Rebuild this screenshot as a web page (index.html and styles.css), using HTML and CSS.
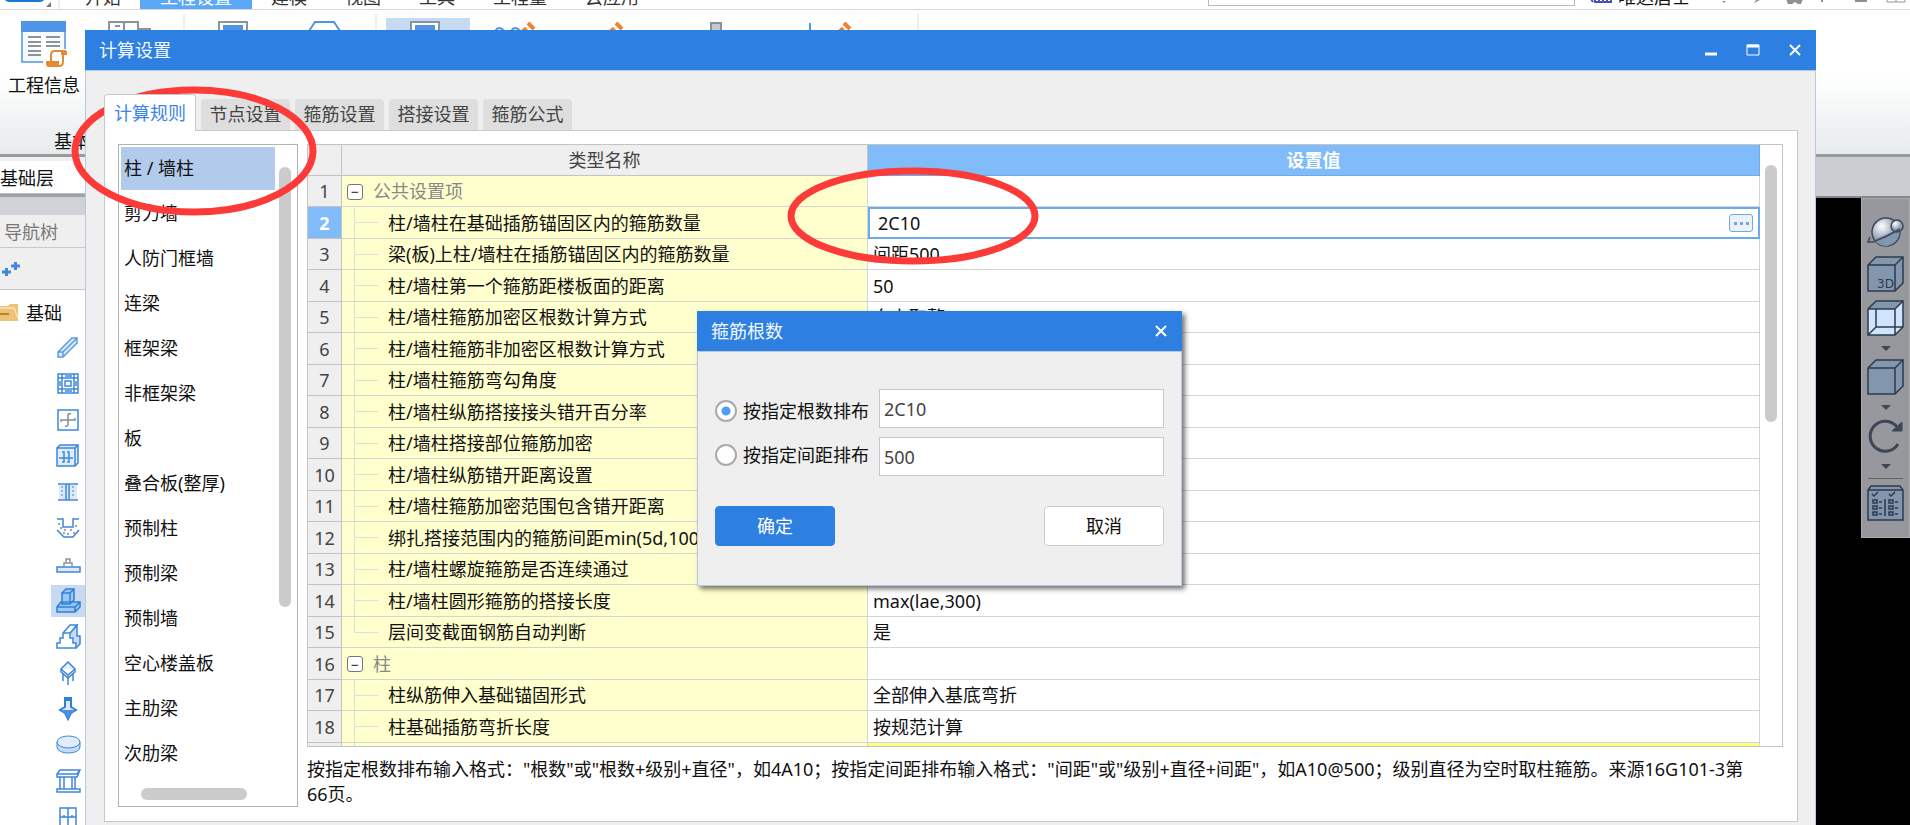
FILE: index.html
```html
<!DOCTYPE html>
<html lang="zh-CN">
<head>
<meta charset="utf-8">
<title>计算设置</title>
<link rel="stylesheet" href="styles.css">
</head>
<body>
<div class="app">
  <header class="topbar">
    <svg class="logo" width="66" height="10" viewBox="0 0 66 10"><path d="M5 0H44Q44 3 38 3H11Q5 3 5 0Z" fill="#1678d8"/><path d="M51 3V8H46Z" fill="#777"/><path d="M59 0V10" stroke="#ddd"/></svg>
    <nav class="menu">
      <a class="menu-item" href="#">开始</a>
      <a class="menu-item active" href="#">工程设置</a>
      <a class="menu-item" href="#">建模</a>
      <a class="menu-item" href="#">视图</a>
      <a class="menu-item" href="#">工具</a>
      <a class="menu-item" href="#">工程量</a>
      <a class="menu-item" href="#">云应用</a>
    </nav>
    <input class="search" type="text" aria-label="搜索">
    <svg class="badge" width="24" height="10" viewBox="0 0 24 10"><path d="M1 0L3 3M5 0V3M9 0V3M13 0V3M17 0V3M21 0V3M4 3H22" stroke="#4a4fb8" stroke-width="2" fill="none"/></svg>
    <span class="user">唯达居士</span>
    <svg class="status" width="206" height="10" viewBox="0 0 206 10"><g fill="#909090"><path d="M14 0H26V1H14ZM18 2H22L20 4ZM46 0H58L50 4L52 1H46ZM82 0H99L97 5H94L91 3L88 5H84ZM117 0H119V3H117ZM151 0H163V3H151Z"/></g><path d="M183 0V3H201V0M192 0V3" fill="none" stroke="#999"/></svg>
  </header>

  <section class="ribbon">
    <div class="ribbon-row">
      <button class="ribbon-btn" type="button">
        <svg width="46" height="50" viewBox="0 0 46 50"><path d="M1 1H44V31M24 41H1V1" fill="#f6faff"/><path d="M44 10V28M22 41H1V10" fill="none" stroke="#4f94e6" stroke-width="1.500"/><path d="M0 0H45V11H0Z" fill="#4f94e6"/><path d="M7 16H20M7 21H20M7 25H20M7 30H20M7 34H20M25 16H39M25 21H39M25 25H39" stroke="#89949b" stroke-width="2"/><path d="M30 42V34Q30 29 34 29H42V43H30Z" fill="#fff"/><path d="M30 41V34Q30 30 34 30H42V41Q42 45 38 45" fill="none" stroke="#e58a32" stroke-width="2"/><path d="M40 29H44Q46 29 46 32V34H40ZM25 40H38V46H28Q25 46 25 43Z" fill="#e58a32"/></svg>
        <span>工程信息</span>
      </button>
      <svg class="ribbon-art" width="900" height="20" viewBox="85 11 900 20"><g fill="none"><path d="M109 31V22H138V31M124 22V31M138 29H151M115 26H120" stroke="#89949b" stroke-width="2"/><path d="M184 14V31M376 14V31M918 14V31" stroke="#ddd"/><path d="M386 18H470V31H386Z" fill="#c8daf1"/><path d="M219 31V22H247V31M411 31V22H439V31" stroke="#89949b" stroke-width="2" fill="#fff"/><path d="M223 25H243V31H223ZM415 25H435V31H415Z" fill="#4f94e6"/><path d="M309 31L315 22H334L340 31" stroke="#4f94e6" stroke-width="2"/><path d="M495 31Q499 25 504 31M511 31Q515 25 520 31" stroke="#4f94e6" stroke-width="2"/><path d="M711 31V23H721V31" fill="#c4c9cf" stroke="#87939b" stroke-width="2"/><path d="M810 23V31" stroke="#4f94e6" stroke-width="2"/><path d="M519 36L527 29M607 36L615 29M836 36L844 29" stroke="#ef8230" stroke-width="6"/><path d="M528 23L534 29M616 23L622 29M844 23L850 29" stroke="#ef8230" stroke-width="4"/></g></svg>
    </div>
    <span class="group-name">基本</span>
  </section>

  <div class="workspace">
    <aside class="sidebar">
      <div class="floor">基础层</div>
      <div class="spacer"></div>
      <h2 class="nav-title">导航树</h2>
      <div class="nav-tools"><svg width="22" height="18" viewBox="0 0 22 18"><path d="M2 12H11M6.500 8V16M11 6H20M15.500 2V10" stroke="#4488da" stroke-width="3"/></svg></div>
      <div class="tree">
        <div class="tree-root"><svg width="20" height="18" viewBox="0 0 20 18"><path d="M0 2H8L10 0H18V17H0Z" fill="#eec377"/><path d="M0 4H14L19 17" fill="none" stroke="#fff3d8"/><path d="M0 10H9" stroke="#b88830" stroke-width="2"/></svg><span>基础</span></div>
        <ul class="tree-icons">
          <li><svg width="26" height="24" viewBox="0 0 26 24"><path d="M3 16L17 2H22V7L8 21H3ZM3 16H8V21M8 16L22 2M5 14L17 2" fill="#dceafa" stroke="#5c9be4" stroke-width="1.500"/></svg></li>
          <li><svg width="26" height="24" viewBox="0 0 26 24"><path d="M3 2H23V21H3ZM7 2V21M19 2V21M3 6H23M3 17H23M10 9H16V14H10ZM10 4H17M10 19H17M5 9V14M21 9V14" fill="none" stroke="#3d86dc" stroke-width="1.500"/></svg></li>
          <li><svg width="26" height="24" viewBox="0 0 26 24"><path d="M3 2H23V22H3Z" fill="#fff" stroke="#3d86dc" stroke-width="1.500"/><path d="M6 14V12H20V10M13 17V7Q13 5 16 6M10 18Q13 19 13 16" fill="none" stroke="#7f8d96" stroke-width="1.500"/></svg></li>
          <li><svg width="26" height="24" viewBox="0 0 26 24"><path d="M2 4H20V22H2ZM2 4L5 1H23V19L20 22M20 4L23 1" fill="#e2edfb" stroke="#3d86dc" stroke-width="1.500"/><path d="M4 14H18M7 8H9V18H7M12 8H14V18H12" fill="none" stroke="#3d86dc" stroke-width="1.500"/></svg></li>
          <li><svg width="26" height="24" viewBox="0 0 26 24"><path d="M4 5H22V19H4Z" fill="#dceafa"/><path d="M3 4H23M3 20H23M11 4V20M14 4V20" stroke="#3d86dc" stroke-width="1.500"/><path d="M7 6V18M18 6V18" stroke="#3d86dc" stroke-dasharray="2 2"/></svg></li>
          <li><svg width="26" height="24" viewBox="0 0 26 24"><path d="M2 3H8V11H18V3H24M2 14L9 21H18L24 14" fill="none" stroke="#3d86dc" stroke-width="1.500"/><path d="M3 8H5M5 12H7M9 14H11M12 18H14M15 14H17M20 10H22M18 17H20M8 17H10" stroke="#888" stroke-width="1.500"/></svg></li>
          <li><svg width="26" height="24" viewBox="0 0 26 24"><path d="M2 15H25V20H2Z" fill="#dceafa" stroke="#3d86dc" stroke-width="1.500"/><path d="M9 14V11H11V7H15V11H17V14M10 11H16" fill="none" stroke="#8a969e" stroke-width="1.500"/></svg></li>
          <li class="selected"><svg width="26" height="26" viewBox="0 0 26 26"><path d="M2 19L6 14H25V19L20 24H2ZM2 19H20V24M20 19L25 14M7 16V5L11 1H19V12L15 16ZM7 5H15V16M15 5L19 1" fill="#9cc8f5" stroke="#2f7fd6" stroke-width="1.500"/></svg></li>
          <li><svg width="26" height="26" viewBox="0 0 26 26"><path d="M15 9L22 1V12H25V20L21 24" fill="#c8dcf5" stroke="#3d86dc" stroke-width="1.500"/><path d="M2 24V19H5V14H8V9L15 1H22L15 9V14H18V19H21V24ZM8 9H15" fill="#fff" stroke="#3d86dc" stroke-width="1.500"/></svg></li>
          <li><svg width="26" height="26" viewBox="0 0 26 26"><path d="M13 2L20 9L13 15L6 9ZM6 9V12L13 18L20 12V9" fill="#e2edfb" stroke="#3d86dc" stroke-width="1.500"/><path d="M13 16V25M8 13V21M18 13V21" stroke="#3d86dc" stroke-width="1.500"/></svg></li>
          <li><svg width="26" height="26" viewBox="0 0 26 26"><path d="M10 2H16V11L21 14L16 17L13 23L10 17L5 14L10 11Z" fill="#dceafa" stroke="#2f7fd6" stroke-width="2"/><path d="M5 14H21L16 17L13 23L10 17Z" fill="#4b90e2"/><path d="M10 2H16V5H10Z" fill="#2f7fd6"/></svg></li>
          <li><svg width="26" height="24" viewBox="0 0 26 24"><path d="M2 9V14C2 22 25 22 25 14V9" fill="#c8dcf5" stroke="#3d86dc"/><ellipse cx="13.500" cy="9" rx="11.500" ry="6" fill="#e2edfb" stroke="#3d86dc"/></svg></li>
          <li><svg width="26" height="24" viewBox="0 0 26 24"><path d="M2 5L5 1H25L22 8H2V5H22L25 1M5 8V20M9 8V20M17 8V20M20 8V20M2 20H25V23H2Z" fill="none" stroke="#3d86dc" stroke-width="1.500"/></svg></li>
          <li><svg width="26" height="24" viewBox="0 0 26 24"><path d="M5 3H21V21H5ZM13 3V21M5 12H21M9 10V13M17 10V13" fill="none" stroke="#3d86dc" stroke-width="1.500"/></svg></li>
        </ul>
      </div>
    </aside>
    <main class="stage">
      <div class="stage-head"></div>
      <div class="canvas">
        <div class="viewbar">
          <svg width="38" height="32" viewBox="0 0 38 32"><defs><radialGradient id="ball" cx="35%" cy="30%"><stop offset="0" stop-color="#fff"/><stop offset="1" stop-color="#8d9bb0"/></radialGradient></defs><circle cx="19" cy="16" r="14" fill="url(#ball)" stroke="#3d4757" stroke-width="1.500"/><path d="M7 24L33 12Q33 27 20 30Q12 30 7 24Z" fill="#8296ae"/><circle cx="30" cy="10" r="6" fill="url(#ball)" stroke="#3d4757" stroke-width="1.500"/><path d="M3 21L1 26H6L20 20L33 13" fill="none" stroke="#3d4757" stroke-width="1.500"/></svg>
          <svg class="cube" width="38" height="36" viewBox="0 0 38 36"><path d="M1 9L9 1H36V27L28 35H1ZM1 9H28V35M28 9L36 1" fill="#8296ae" stroke="#2f3a4a" stroke-width="1.500"/><text x="10" y="32" class="cube-text">3D</text></svg>
          <svg class="cube" width="38" height="36" viewBox="0 0 38 36"><path d="M1 9L9 1H36V27L28 35H1Z" fill="#cfe5ff"/><path d="M1 9L9 1H36L28 9Z" fill="#8296ae"/><path d="M1 9L9 1H36V27L28 35H1ZM1 9H28V35M28 9L36 1M9 9V27H36M9 27L1 35" fill="none" stroke="#2f3a4a" stroke-width="1.500"/></svg>
          <i class="caret"></i>
          <svg class="cube" width="38" height="36" viewBox="0 0 38 36"><path d="M1 9L9 1H36V27L28 35H1ZM1 9H28V35M28 9L36 1" fill="#8296ae" stroke="#2f3a4a" stroke-width="1.500"/></svg>
          <i class="caret"></i>
          <svg class="cube" width="38" height="36" viewBox="0 0 38 36"><path d="M31 26A15 15 0 1 1 30 9" fill="none" stroke="#3d4757" stroke-width="3"/><path d="M35 4V13H25Z" fill="#3d4757" stroke="#3d4757"/></svg>
          <i class="caret"></i>
          <hr class="rule">
          <svg width="38" height="36" viewBox="0 0 38 36"><path d="M1 5L4 1H33L36 5V35H1ZM1 5H36" fill="#8296ae" stroke="#2f3a4a" stroke-width="1.500"/><path d="M5 9L7 11L11 7M22 9L24 11L28 7M6 15H10V18H6ZM6 21H10V24H6ZM6 27H10V30H6ZM22 15H26V18H22ZM22 21H26V24H22ZM22 27H26V30H22ZM12 17H15M12 23H15M12 29H15M28 17H31M28 23H31M28 29H31M18 14V31" fill="none" stroke="#2f3a4a" stroke-width="1.500"/></svg>
        </div>
      </div>
    </main>
  </div>
</div>

<section class="dialog" aria-label="计算设置">
  <header class="titlebar">
    <h1 class="title">计算设置</h1>
    <button class="win" type="button" aria-label="最小化"><svg width="14" height="14" viewBox="0 0 14 14"><path d="M1 11H13" stroke="#fff" stroke-width="3"/></svg></button>
    <button class="win" type="button" aria-label="最大化"><svg width="14" height="14" viewBox="0 0 14 14"><path d="M1 2H13V12H1Z" fill="none" stroke="#fff"/><path d="M1 3H13" stroke="#fff" stroke-width="3"/></svg></button>
    <button class="win" type="button" aria-label="关闭"><svg width="14" height="14" viewBox="0 0 14 14"><path d="M2 2L12 12M12 2L2 12" stroke="#fff" stroke-width="2"/></svg></button>
  </header>
  <div class="dialog-body">
    <div class="tabs">
      <button class="tab current" type="button">计算规则</button>
      <button class="tab" type="button">节点设置</button>
      <button class="tab" type="button">箍筋设置</button>
      <button class="tab" type="button">搭接设置</button>
      <button class="tab" type="button">箍筋公式</button>
    </div>
    <div class="pane">
      <div class="types">
        <ul class="type-list">
          <li class="type chosen">柱 / 墙柱</li>
          <li class="type">剪力墙</li>
          <li class="type">人防门框墙</li>
          <li class="type">连梁</li>
          <li class="type">框架梁</li>
          <li class="type">非框架梁</li>
          <li class="type">板</li>
          <li class="type">叠合板(整厚)</li>
          <li class="type">预制柱</li>
          <li class="type">预制梁</li>
          <li class="type">预制墙</li>
          <li class="type">空心楼盖板</li>
          <li class="type">主肋梁</li>
          <li class="type">次肋梁</li>
        </ul>
        <div class="vtrack"><div class="vthumb list-thumb"></div></div>
        <div class="htrack"><div class="hthumb"></div></div>
      </div>
      <div class="detail">
        <div class="grid-box">
          <table class="grid">
            <colgroup><col class="c-index"><col class="c-name"><col></colgroup>
            <thead><tr><th></th><th>类型名称</th><th class="value-head">设置值</th></tr></thead>
            <tbody>
              <tr><th>1</th><td class="group"><button class="fold" type="button" aria-label="折叠">−</button>公共设置项</td><td></td></tr>
              <tr class="active-row"><th>2</th><td class="leaf">柱/墙柱在基础插筋锚固区内的箍筋数量</td><td class="editing"><div class="editor"><input class="cell-input" type="text" value="2C10" aria-label="设置值"><button class="more" type="button" aria-label="更多"><i></i><i></i><i></i></button></div></td></tr>
              <tr><th>3</th><td class="leaf">梁(板)上柱/墙柱在插筋锚固区内的箍筋数量</td><td>间距500</td></tr>
              <tr><th>4</th><td class="leaf">柱/墙柱第一个箍筋距楼板面的距离</td><td>50</td></tr>
              <tr><th>5</th><td class="leaf">柱/墙柱箍筋加密区根数计算方式</td><td>向上取整+1</td></tr>
              <tr><th>6</th><td class="leaf">柱/墙柱箍筋非加密区根数计算方式</td><td></td></tr>
              <tr><th>7</th><td class="leaf">柱/墙柱箍筋弯勾角度</td><td></td></tr>
              <tr><th>8</th><td class="leaf">柱/墙柱纵筋搭接接头错开百分率</td><td></td></tr>
              <tr><th>9</th><td class="leaf">柱/墙柱搭接部位箍筋加密</td><td></td></tr>
              <tr><th>10</th><td class="leaf">柱/墙柱纵筋错开距离设置</td><td></td></tr>
              <tr><th>11</th><td class="leaf">柱/墙柱箍筋加密范围包含错开距离</td><td></td></tr>
              <tr><th>12</th><td class="leaf">绑扎搭接范围内的箍筋间距min(5d,100)</td><td></td></tr>
              <tr><th>13</th><td class="leaf">柱/墙柱螺旋箍筋是否连续通过</td><td></td></tr>
              <tr><th>14</th><td class="leaf">柱/墙柱圆形箍筋的搭接长度</td><td>max(lae,300)</td></tr>
              <tr><th>15</th><td class="leaf last">层间变截面钢筋自动判断</td><td>是</td></tr>
              <tr><th>16</th><td class="group"><button class="fold" type="button" aria-label="折叠">−</button>柱</td><td></td></tr>
              <tr><th>17</th><td class="leaf">柱纵筋伸入基础锚固形式</td><td>全部伸入基底弯折</td></tr>
              <tr><th>18</th><td class="leaf">柱基础插筋弯折长度</td><td>按规范计算</td></tr>
              <tr><th></th><td class="leaf"></td><td class="changed"></td></tr>
            </tbody>
          </table>
          <div class="vtrack"><div class="vthumb grid-thumb"></div></div>
        </div>
        <p class="hint">按指定根数排布输入格式："根数"或"根数+级别+直径"，如4A10；按指定间距排布输入格式："间距"或"级别+直径+间距"，如A10@500；级别直径为空时取柱箍筋。来源16G101-3第66页。</p>
      </div>
    </div>
  </div>
</section>

<form class="modal" aria-label="箍筋根数">
  <header class="titlebar">
    <h2 class="title">箍筋根数</h2>
    <button class="win" type="button" aria-label="关闭"><svg width="14" height="14" viewBox="0 0 14 14"><path d="M2 2L12 12M12 2L2 12" stroke="#fff" stroke-width="2"/></svg></button>
  </header>
  <div class="modal-body">
    <div class="options">
      <div class="radios">
        <label class="option"><input class="radio" type="radio" name="mode" checked>按指定根数排布</label>
        <label class="option"><input class="radio" type="radio" name="mode">按指定间距排布</label>
      </div>
      <div class="fields">
        <input class="field" type="text" value="2C10" aria-label="按指定根数排布">
        <input class="field" type="text" value="500" aria-label="按指定间距排布">
      </div>
    </div>
    <div class="actions">
      <button class="btn primary" type="button">确定</button>
      <button class="btn" type="button">取消</button>
    </div>
  </div>
</form>

<svg class="mark mark-type" width="246" height="132" viewBox="0 0 246 132"><ellipse cx="123" cy="66" rx="119" ry="61"/></svg>
<svg class="mark mark-value" width="254" height="98" viewBox="0 0 254 98"><ellipse cx="127" cy="49" rx="122" ry="45"/></svg>
</body>
</html>
```

FILE: styles.css
```css
* { box-sizing: border-box; }

body {
  margin: 0;
  height: 100vh;
  overflow: hidden;
  position: relative;
  background: #fff;
  color: #111;
  font: 18px/24px "Noto Sans", "Noto Sans CJK SC", sans-serif;
}

button, input { font: inherit; color: inherit; margin: 0; }
button { padding: 0; border: 0; background: none; }
ul { margin: 0; padding: 0; list-style: none; }
h1, h2, p { margin: 0; font-size: 18px; font-weight: normal; }
svg { display: block; flex: none; }

/* Application window */
.app { display: flex; flex-direction: column; height: 100%; }

.topbar {
  display: flex;
  align-items: flex-end;
  height: 10px;
  flex: none;
  overflow: hidden;
  border-bottom: 1px solid #d8d8d8;
}
.menu { display: flex; flex: 1; }
.menu-item { padding: 0 19px; color: #333; text-decoration: none; line-height: 24px; }
.menu-item.active { padding: 0 20px; background: #5ba8f8; color: #fff; }
.search { width: 367px; height: 28px; margin: 0 15px 3px 0; border: 1px solid #bbb; background: #fff; }
.user { margin-left: 4px; line-height: 24px; }
.status { margin-left: 14px; }

.ribbon {
  flex: none;
  height: 147px;
  padding: 11px 0 0 6px;
  background: linear-gradient(#fff 45%, #e6ebec);
  border-bottom: 3px solid #989b9e;
}
.ribbon-row { display: flex; gap: 3px; height: 108px; }
.ribbon-btn { display: flex; flex-direction: column; align-items: center; gap: 3px; width: 76px; white-space: nowrap; }
.ribbon-art { margin-top: -10px; }
.ribbon-btn span { line-height: 22px; }
.group-name { display: block; margin-left: 48px; }

.workspace { display: flex; flex: 1; min-height: 0; }
.sidebar { display: flex; flex-direction: column; width: 85px; background: #efefef; }
.floor { margin-top: 4px; height: 33px; padding: 5px 0; background: #fff; border-bottom: 1px solid #bbb; }
.spacer { height: 21px; background: #d0d2d8; border-top: 3px solid #9ea2a9; }
.nav-title { height: 33px; padding: 5px 4px; color: #777; border-bottom: 1px solid #c5cad0; }
.nav-tools { height: 42px; padding-top: 12px; border-bottom: 1px solid #c5cad0; }
.tree { flex: 1; min-height: 0; overflow: hidden; background: #fff; }
.tree-root { display: flex; align-items: center; gap: 6px; padding: 11px 0 5px; }
.tree-icons { display: flex; flex-direction: column; }
.tree-icons li { display: flex; align-items: center; height: 36px; padding-left: 4px; margin-left: 51px; }
.tree-icons .selected { height: 32px; margin-top: 3px; margin-bottom: 2px; background: #c8daf1; }

.stage { flex: 1; display: flex; flex-direction: column; }
.stage-head { height: 41px; background: #cacdd1; border-bottom: 2px solid #85878b; }
.canvas { flex: 1; display: flex; justify-content: flex-end; align-items: flex-start; background: #000; }
.viewbar {
  display: flex;
  flex-direction: column;
  align-items: center;
  width: 49px;
  padding: 17px 0 16px;
  background: #96989d;
  border: 1px solid #aaa;
}
.cube { margin-top: 8px; }
.cube-text { font: 12px "DejaVu Sans", sans-serif; fill: #2f3a4a; }
.caret { margin-top: 10px; border: 5px solid transparent; border-top-color: #3d4757; border-bottom: 0; }
.rule { width: 35px; margin: 9px 0 6px; border: 0; border-top: 1px solid #65615c; }

/* Settings dialog */
.dialog {
  position: absolute;
  top: 30px;
  right: 94px;
  bottom: 0;
  left: 85px;
  display: flex;
  flex-direction: column;
  background: #efefef;
}
.titlebar { display: flex; align-items: center; gap: 28px; height: 40px; flex: none; padding: 0 14px; background: #2d80e2; color: #f3f8ff; }
.title { flex: 1; }
.dialog-body {
  flex: 1;
  min-height: 0;
  display: flex;
  flex-direction: column;
  padding: 23px 17px 3px 18px;
  border: solid #b9c8dc;
  border-width: 1px 1px 0;
}
.tabs { display: flex; align-items: flex-end; gap: 5px; height: 36px; flex: none; }
.tab { width: 89px; height: 31px; background: #dedede; border-radius: 4px 4px 0 0; color: #444; line-height: 31px; }
.tab.current {
  width: 92px;
  height: 37px;
  margin-bottom: -1px;
  background: #fff;
  border: 1px solid #c6c9cc;
  border-bottom: 0;
  color: #3b86e4;
  z-index: 1;
}
.pane { display: flex; gap: 9px; flex: 1; min-height: 0; padding: 13px 14px 14px 13px; background: #fff; border: 1px solid #c6c9cc; }

.types {
  display: grid;
  grid-template-columns: 1fr 20px;
  grid-template-rows: 1fr 16px;
  width: 180px;
  flex: none;
  padding: 2px;
  border: 1px solid #b3b3b3;
}
.type { height: 45px; padding: 9px 3px; }
.chosen { height: 43px; margin-bottom: 2px; background: #b2cbed; }
.vtrack { display: flex; justify-content: center; padding-top: 20px; }
.vthumb { width: 12px; border-radius: 6px; background: #cbcbcb; }
.list-thumb { height: 440px; }
.grid-thumb { height: 257px; }
.htrack { grid-column: 1 / -1; padding-left: 20px; }
.hthumb { width: 106px; height: 12px; border-radius: 6px; background: #cbcbcb; }

.detail { display: flex; flex-direction: column; flex: 1; min-width: 0; }
.grid-box { display: flex; flex: 1; min-height: 0; overflow: hidden; border: 1px solid #c4c4c4; }
.grid-box .vtrack { width: 22px; flex: none; }
.grid { flex: 1; width: 100%; table-layout: fixed; border-collapse: separate; border-spacing: 0; }
.c-index { width: 34px; }
.c-name { width: 526px; }
.grid tr { height: 31px; }
.grid tbody tr:nth-child(even) { height: 32px; }
.grid th, .grid td { padding: 0 5px; border: solid #d4d4d4; border-width: 0 1px 1px 0; text-align: left; font-weight: normal; white-space: nowrap; overflow: hidden; }
.grid th { padding: 0; background: #efefef; border-color: #c4c4c4; color: #444; text-align: center; }
.grid .value-head { background: #80bbfa; border-color: #6cabea; color: #fff; font-weight: bold; }
.grid .active-row th { background: #80bbfa; color: #fff; font-weight: bold; }
.grid .group { background: #ffffce; color: #888; }
.grid .leaf {
  padding-left: 46px;
  background:
    linear-gradient(#dedede, #dedede) 12px 15px / 24px 1px no-repeat,
    linear-gradient(#dedede, #dedede) 12px 0 / 1px 100% no-repeat,
    #ffffce;
}
.grid .last {
  background:
    linear-gradient(#dedede, #dedede) 12px 15px / 24px 1px no-repeat,
    linear-gradient(#dedede, #dedede) 12px 0 / 1px 15px no-repeat,
    #ffffce;
}
.grid .changed { background: #ffff80; }
.fold { width: 16px; height: 16px; margin-right: 10px; border: 1px solid #777; border-radius: 3px; background: #fff; color: #222; font-size: 14px; line-height: 13px; vertical-align: 1px; }
.grid .editing { padding: 0; border: 2px solid #6cabea; }
.editor { display: flex; align-items: center; padding: 0 5px 0 8px; height: 27px; }
.cell-input { flex: 1; min-width: 0; height: 26px; padding: 0; border: 0; outline: 0; }
.more { display: flex; align-items: center; justify-content: center; gap: 3px; width: 24px; height: 18px; border: 1px solid #6cabea; border-radius: 3px; background: #eef2f8; }
.more i { width: 3px; height: 3px; background: #6cabea; }
.hint { flex: none; margin-top: 10px; padding-right: 28px; line-height: 25px; }

/* Stirrup count modal */
.modal {
  position: absolute;
  top: 311px;
  left: 697px;
  width: 485px;
  background: #efefef;
  box-shadow: 3px 3px 5px rgba(0, 0, 0, 0.55);
}
.modal-body { padding: 37px 17px 39px; border: 1px solid #b9c8dc; }
.options { display: flex; gap: 10px; }
.radios { display: flex; flex-direction: column; gap: 20px; padding-top: 10px; }
.option { display: flex; align-items: center; gap: 6px; white-space: nowrap; }
.radio { appearance: none; width: 22px; height: 22px; border: 2px solid #aaa; border-radius: 50%; background: #fff; }
.radio:checked { background: radial-gradient(circle, #4f9df8 4px, #fff 5px); }
.fields { display: flex; flex-direction: column; flex: 1; gap: 9px; }
.field { width: 100%; height: 39px; padding: 0 4px; border: 1px solid #c6c9cc; background: #fff; color: #444; }
.actions { display: flex; justify-content: space-between; margin-top: 30px; }
.btn { width: 120px; height: 40px; border: 1px solid #ccc; border-radius: 4px; background: #fff; }
.btn.primary { border-color: #2d80e2; background: #2d80e2; color: #fff; }

/* Highlight rings over the windows */
.mark { position: absolute; fill: none; stroke: #fc3a38; stroke-width: 7px; pointer-events: none; }
.mark-type { top: 85px; left: 71px; }
.mark-value { top: 167px; left: 786px; }
```
